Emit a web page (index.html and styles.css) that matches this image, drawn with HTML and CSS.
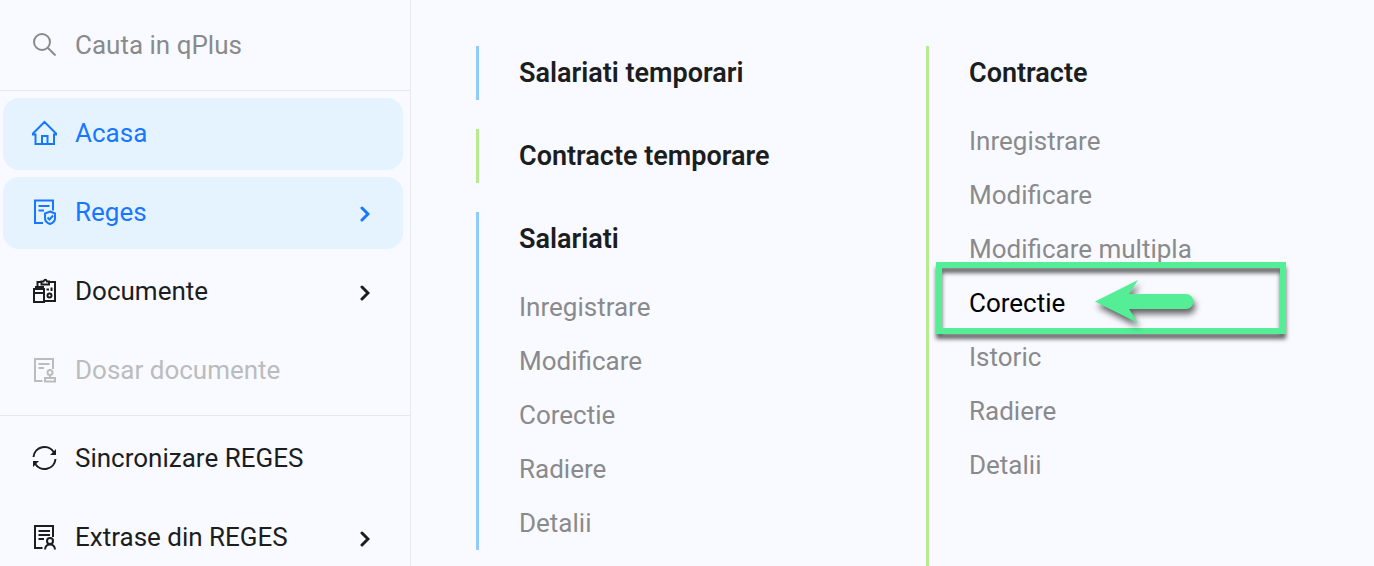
FILE: index.html
```html
<!DOCTYPE html>
<html lang="ro">
<head>
	<meta charset="UTF-8">
	<title>qPlus</title>
	<link rel="stylesheet" href="styles.css">
</head>
<body>
	<div class="page">
		<aside class="sidebar">
			<div class="search">
				<label class="icon" for="search">
					<svg viewBox="0 0 26 26"><circle cx="10" cy="10" r="8"/><path d="M15.5 15.5L23.5 23.5"/></svg>
				</label>
				<input type="search" id="search" placeholder="Cauta in qPlus" aria-label="Cauta in qPlus">
			</div>
			<nav class="menu">
				<a href="#" class="item active">
					<span class="icon"><svg viewBox="0 0 26 26"><path d="M1 14.5V13.5L12.5 2L24 13.5V14.5H22V24H3.5V14.5ZM10 24V16H15.5V24"/></svg></span>
					<span class="text">Acasa</span>
				</a>
				<a href="#" class="item active">
					<span class="icon"><svg viewBox="0 0 26 26"><path d="M11 24H3V1.5H21V11.5M6.5 7H17.5M6.5 11.5H12"/><path d="M18 12.5L23 14.5V19.5Q23 23 18 25Q13 23 13 19.500V14.5ZM15.5 18.5L17.5 20.5L21 16.5"/></svg></span>
					<span class="text">Reges</span>
					<svg class="arrow" viewBox="0 0 10 16"><path d="M2 2L8 8L2 14"/></svg>
				</a>
				<a href="#" class="item">
					<span class="icon"><svg viewBox="0 0 26 26"><path d="M5.5 9V4H9.500M17 4H23V23H12M2 11H12V24H2ZM2 15H12M4 11V9H11V11M9.500 3.5H11.500Q13.500 0 15 3.5H17V6.5H9.500ZM14.500 11.5H17M19.5 9.500V13"/><circle cx="17.5" cy="17.5" r="2"/></svg></span>
					<span class="text">Documente</span>
					<svg class="arrow" viewBox="0 0 10 16"><path d="M2 2L8 8L2 14"/></svg>
				</a>
				<a href="#" class="item disabled" aria-disabled="true">
					<span class="icon"><svg viewBox="0 0 26 26"><path d="M10.5 24H3V2H21V12M6.5 7H17.5M6.5 11H12"/><circle cx="18" cy="15.500" r="2.5"/><path d="M18 18V21M13 21H23V24.5H13Z"/></svg></span>
					<span class="text">Dosar documente</span>
				</a>
			</nav>
			<nav class="menu">
				<a href="#" class="item">
					<span class="icon"><svg viewBox="0 0 26 26"><path d="M1.500 12A11 11 0 0 1 22 7.500M23.500 14A11 11 0 0 1 3 18.500"/><path class="fill" d="M24 4V10H18ZM1 22V16H7Z"/></svg></span>
					<span class="text">Sincronizare REGES</span>
				</a>
				<a href="#" class="item">
					<span class="icon"><svg viewBox="0 0 26 26"><path d="M10.5 24H3V2H21V13M6.5 7H18M6.5 11H18M6.5 15H12"/><circle cx="18" cy="17" r="3"/><path d="M13 25.5Q13.500 20.5 18 20.5Q22.500 20.5 23 25.5"/></svg></span>
					<span class="text">Extrase din REGES</span>
					<svg class="arrow" viewBox="0 0 10 16"><path d="M2 2L8 8L2 14"/></svg>
				</a>
			</nav>
		</aside>
		<main class="content">
			<div class="column">
				<section class="group blue">
					<h2>Salariati temporari</h2>
				</section>
				<section class="group green">
					<h2>Contracte temporare</h2>
				</section>
				<section class="group blue">
					<h2>Salariati</h2>
					<ul>
						<li><a href="#">Inregistrare</a></li>
						<li><a href="#">Modificare</a></li>
						<li><a href="#">Corectie</a></li>
						<li><a href="#">Radiere</a></li>
						<li><a href="#">Detalii</a></li>
					</ul>
				</section>
			</div>
			<div class="column">
				<section class="group green tall">
					<h2>Contracte</h2>
					<ul>
						<li><a href="#">Inregistrare</a></li>
						<li><a href="#">Modificare</a></li>
						<li><a href="#">Modificare multipla</a></li>
						<li class="marked">
							<a href="#">Corectie</a>
							<span class="frame"></span>
							<svg class="pointer" viewBox="0 0 100 44"><path d="M0 21.5L43 0L34 14H91A7.5 7.5 0 0 1 91 29H34L43 43Z"/></svg>
						</li>
						<li><a href="#">Istoric</a></li>
						<li><a href="#">Radiere</a></li>
						<li><a href="#">Detalii</a></li>
					</ul>
				</section>
			</div>
		</main>
	</div>
</body>
</html>
```

FILE: styles.css
```css
*{box-sizing: border-box;}
body,h2,ul,input{margin: 0;padding: 0;}
ul{list-style: none;}
a{color: inherit;text-decoration: none;}
body{font: 400 26px/54px Roboto, "Liberation Sans", sans-serif;color: #1c1d1f;background: #f9faff;}
svg{display: block;fill: none;stroke: currentColor;stroke-width: 2;}
.page{display: flex;height: 100vh;overflow: hidden;}

.sidebar{flex: none;width: 411px;border-right: 1px solid #e9eaef;}
.search{display: flex;align-items: center;height: 91px;padding-left: 32px;border-bottom: 1px solid #e6e7eb;color: #8a8a8c;}
.search input{flex: 1;min-width: 0;border: 0;outline: none;background: none;font: inherit;color: inherit;}
.search input::placeholder{color: #8a8a8c;opacity: 1;}
.icon{flex: none;width: 26px;margin-right: 17px;}
.menu{display: flex;flex-direction: column;gap: 7px;padding: 7px 7px 8px 3px;}
.menu + .menu{border-top: 1px solid #e6e7eb;}
.item{display: flex;align-items: center;height: 72px;padding: 0 33px 2px 29px;border-radius: 16px;}
.item .text{flex: 1;}
.item.active{background: #e4f3ff;color: #1877ff;}
.item.disabled{color: #bbbcbe;}
.arrow{width: 10px;height: 16px;margin-top: 4px;stroke-width: 3;stroke-linecap: round;}
.fill{fill: currentColor;stroke: none;}

.content{flex: 1;display: grid;grid-template-columns: repeat(2, 1fr);gap: 2px;padding: 46px 0 0 65px;}
.column{display: flex;flex-direction: column;gap: 29px;}
.group{padding-left: 40px;border-left: 3px solid;}
.group.blue{border-color: #91caff;}
.group.green{border-color: #b7eb8f;}
.group.tall{flex: 1;}
.group h2{font-size: 27px;font-weight: 600;}
.group ul{margin-top: 14px;color: #8a8a8c;}
.group a{display: block;}
.marked{position: relative;color: #000;}
.frame{position: absolute;top: -14px;left: -33px;width: 350px;height: 72px;border: 6px solid #53ee95;filter: drop-shadow(0 5px 2px rgba(0,0,0,.6));pointer-events: none;}
.pointer{position: absolute;top: 4px;left: 126px;width: 100px;height: 44px;overflow: visible;fill: #53ee95;stroke: none;filter: drop-shadow(2px 5px 3px rgba(0,0,0,.6));}
```
